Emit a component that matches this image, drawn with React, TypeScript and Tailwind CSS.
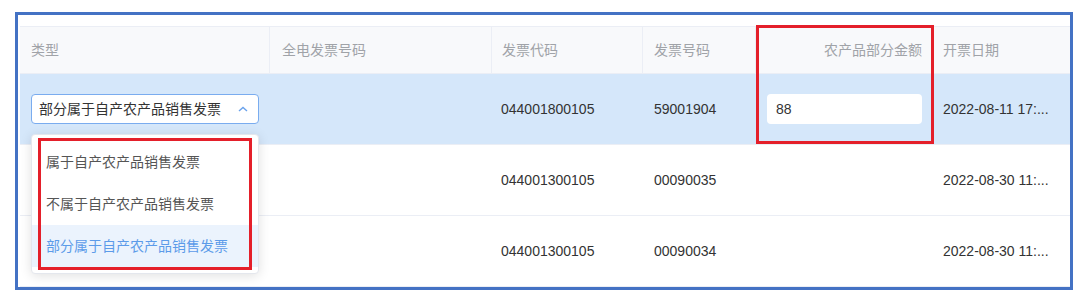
import React from 'react';

const font = { fontFamily: '"Liberation Sans", "Noto Sans CJK SC", sans-serif' };

const cols = 'grid grid-cols-[250px_222px_151px_113px_177px_135px]';

const rows = [
  { code: '044001300105', no: '00090035', date: '2022-08-30 11:...' },
  { code: '044001300105', no: '00090034', date: '2022-08-30 11:...' },
];

const options = ['属于自产农产品销售发票', '不属于自产农产品销售发票', '部分属于自产农产品销售发票'];

export default function App() {
  return (
    <div className="relative w-[1080px] h-[299px] bg-white overflow-hidden text-[14px]" style={font}>
      <div className="absolute left-[15px] top-[12px] w-[1058px] h-[278px] border-[3px] border-[#4472c4] bg-white pt-[11px] pl-[2px] overflow-hidden">
        {/* Header */}
        <div className={`${cols} h-[48px] border-y border-[#ebeef5] bg-[#f8f9fb] text-[#a0a3a8]`}>
          <div className="flex items-center pl-[11px] border-r border-[#ebeef5]">类型</div>
          <div className="flex items-center pl-[12px] border-r border-[#ebeef5]">全电发票号码</div>
          <div className="flex items-center pl-[10px] border-r border-[#ebeef5]">发票代码</div>
          <div className="flex items-center pl-[11px] border-r border-[#ebeef5]">发票号码</div>
          <div className="flex items-center justify-end pr-[10px] border-r border-[#ebeef5]">农产品部分金额</div>
          <div className="flex items-center pl-[10px]">开票日期</div>
        </div>

        {/* Selected row */}
        <div className={`${cols} h-[71px] border-b border-[#ebeef5] bg-[#d5e7fa] text-[#333]`}>
          <div className="flex items-center pl-[11px]">
            <div className="relative">
              <div className="flex items-center justify-between w-[228px] h-[30px] rounded-[4px] border border-[#7aacef] bg-white pl-[7px] pr-[10px]">
                <span>部分属于自产农产品销售发票</span>
                <svg width="10" height="6" viewBox="0 0 10 6" fill="none">
                  <path d="M1 5L5 1.5L9 5" stroke="#6aa2ec" strokeWidth="1.4" />
                </svg>
              </div>
              {/* Dropdown */}
              <div className="absolute left-0 top-[40px] z-10 w-[228px] rounded-[4px] border border-[#e4e7ed] bg-white py-[6px] shadow-[0_2px_12px_rgba(0,0,0,0.12)]">
                {options.map((o, i) => (
                  <div
                    key={o}
                    className={`flex items-center h-[42px] pl-[14px] ${
                      i === 2 ? 'bg-[#ebf3fd] text-[#5c9be9]' : 'text-[#555]'
                    }`}
                  >
                    {o}
                  </div>
                ))}
              </div>
            </div>
          </div>
          <div />
          <div className="flex items-center pl-[9px]">044001800105</div>
          <div className="flex items-center pl-[11px]">59001904</div>
          <div className="flex items-center pl-[11px]">
            <div className="flex items-center w-[155px] h-[30px] rounded-[4px] bg-white pl-[9px]">88</div>
          </div>
          <div className="flex items-center pl-[10px]">2022-08-11 17:...</div>
        </div>

        {rows.map((r, i) => (
          <div key={i} className={`${cols} h-[71px] border-b border-[#ebeef5] bg-white text-[#333]`}>
            <div />
            <div />
            <div className="flex items-center pl-[9px]">{r.code}</div>
            <div className="flex items-center pl-[11px]">{r.no}</div>
            <div />
            <div className="flex items-center pl-[10px]">{r.date}</div>
          </div>
        ))}
      </div>

      {/* Red annotation boxes */}
      <div className="absolute left-[38px] top-[138px] w-[214px] h-[132px] border-[3px] border-[#e41f2a] z-20" />
      <div className="absolute left-[756px] top-[25px] w-[178px] h-[119px] border-[3px] border-[#e41f2a] z-20" />
    </div>
  );
}
